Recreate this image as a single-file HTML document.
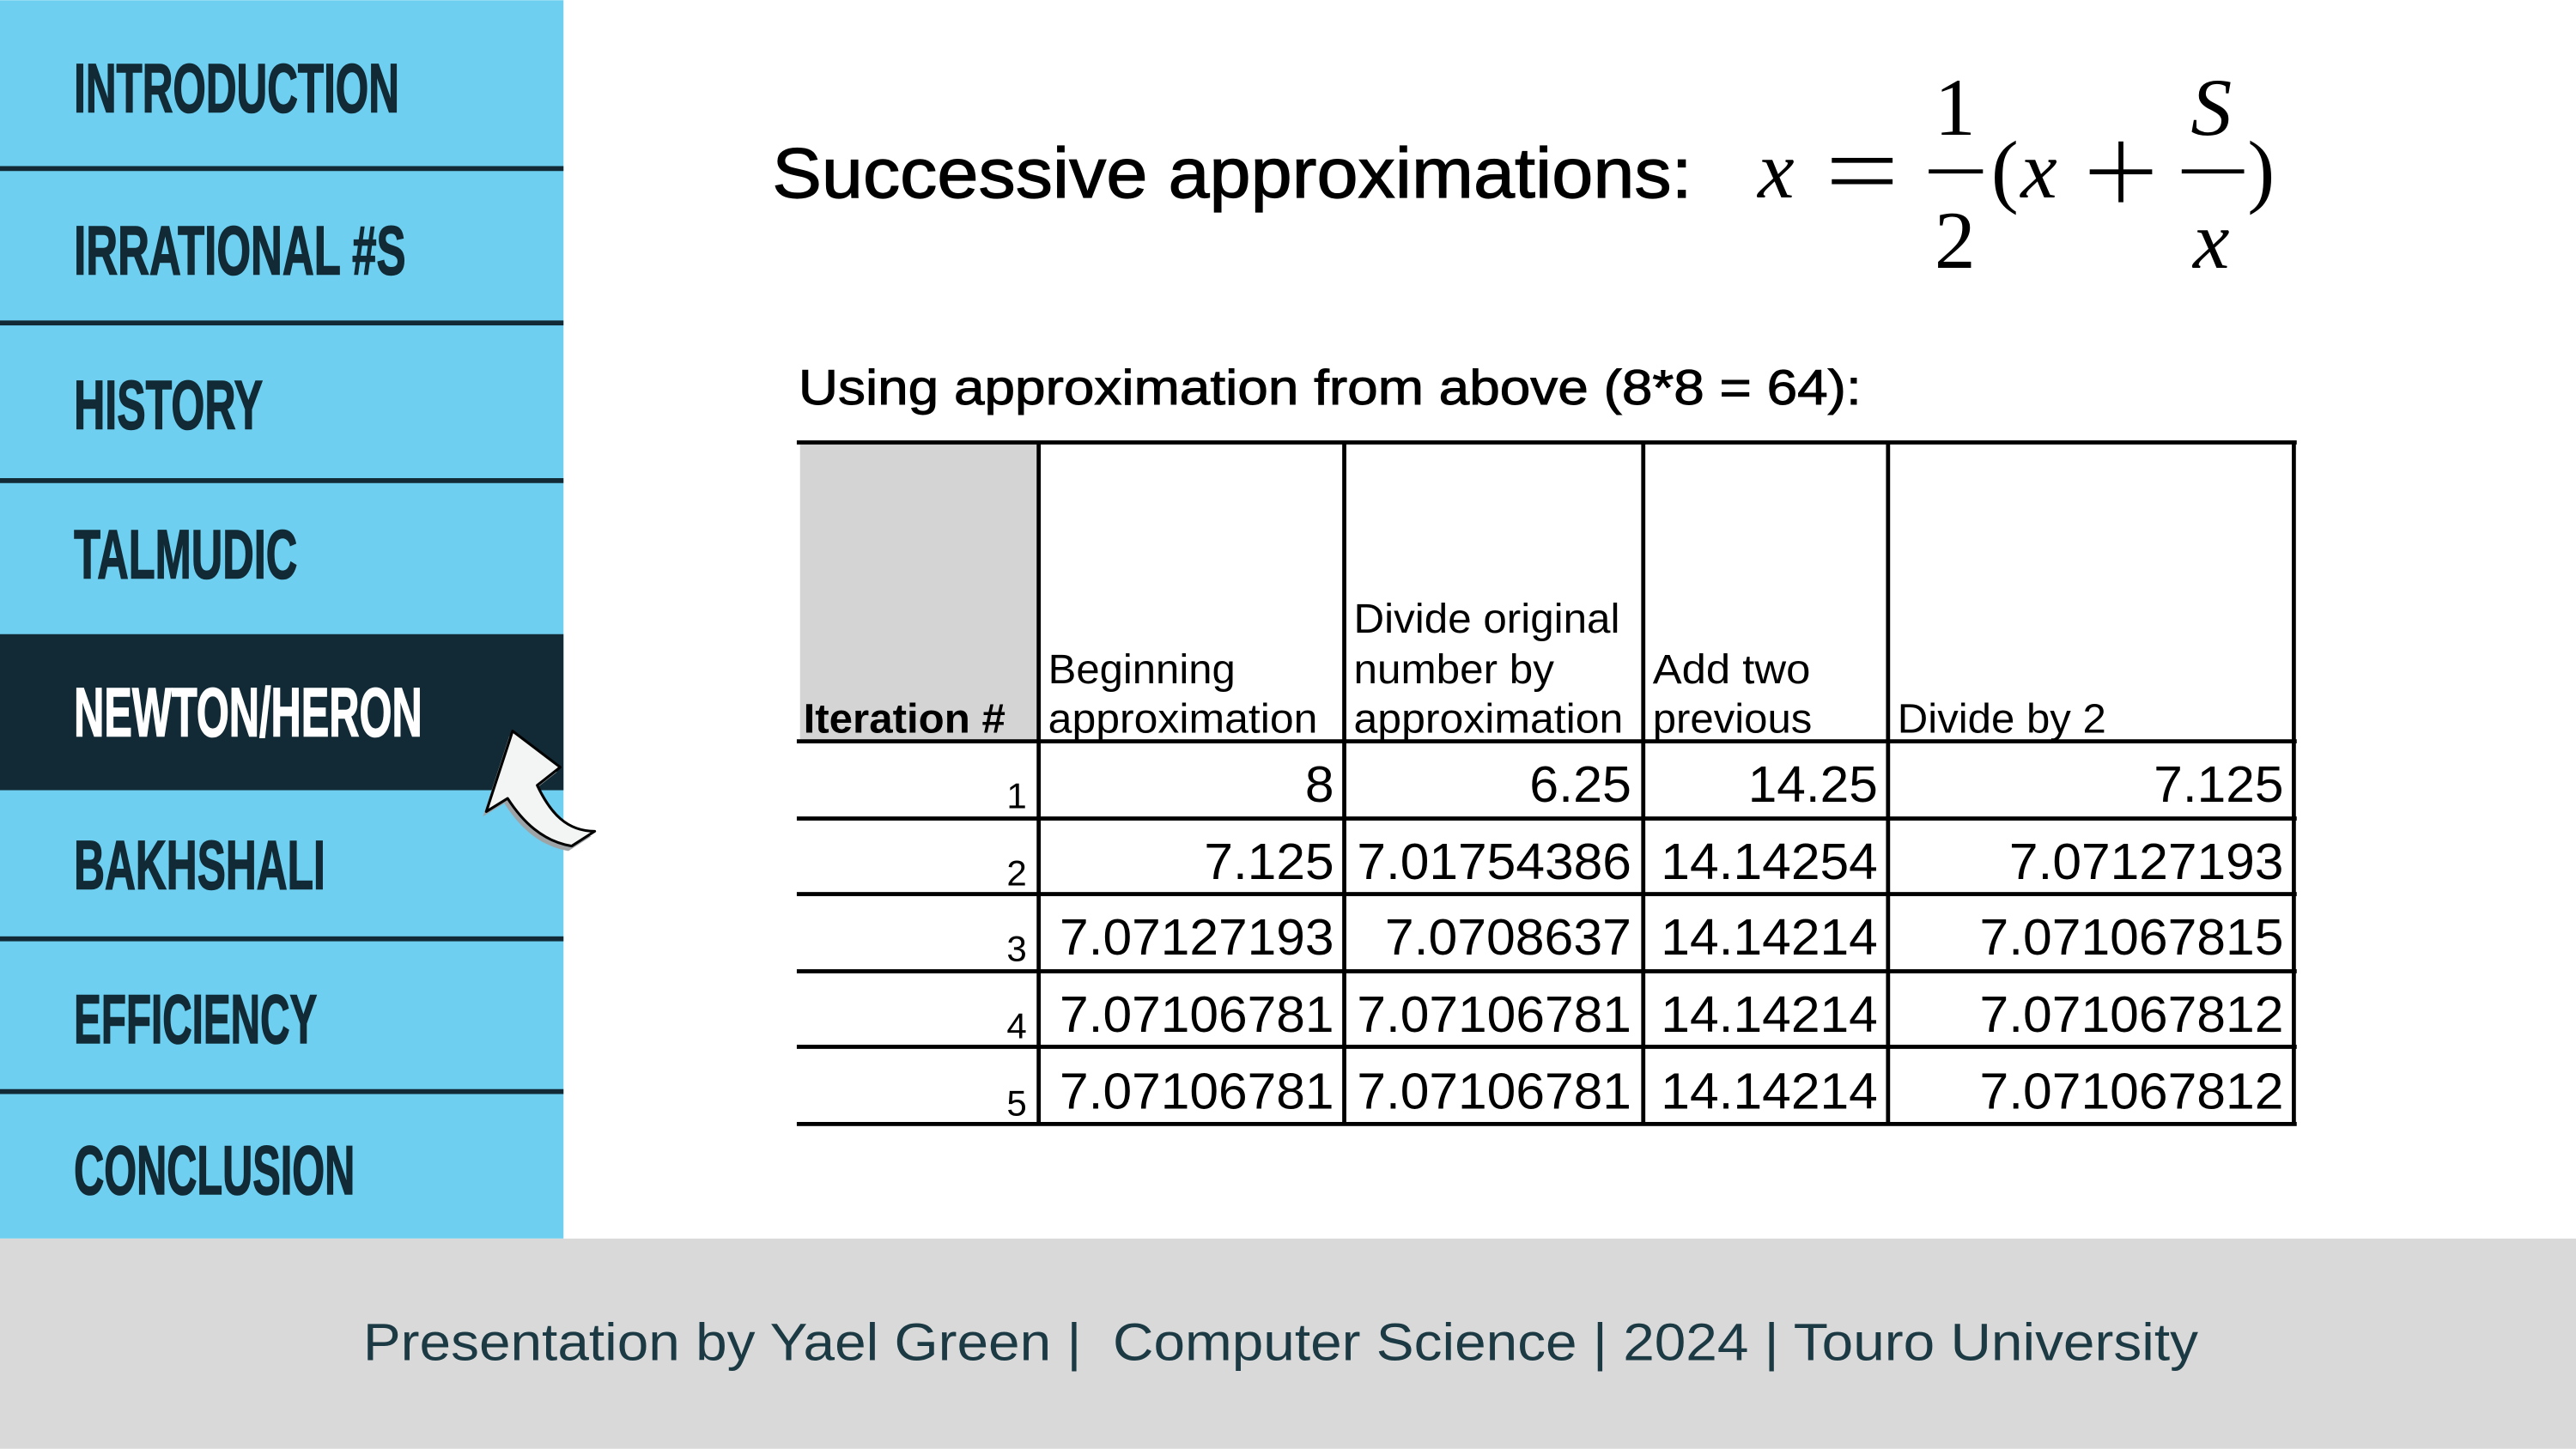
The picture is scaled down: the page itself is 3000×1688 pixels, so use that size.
<!DOCTYPE html>
<html><head><meta charset="utf-8"><style>html,body{margin:0;padding:0;background:#fff}svg{display:block}</style></head>
<body>
<svg width="3000" height="1688" viewBox="0 0 1568 882" xmlns="http://www.w3.org/2000/svg">
<rect width="1568" height="882" fill="#fff"/>
<rect x="0" y="0" width="343" height="754" fill="#6ecff0"/>
<rect x="0" y="386" width="343" height="95" fill="#112a35"/>
<g fill="#112a35">
<rect x="0" y="101" width="343" height="3"/>
<rect x="0" y="195" width="343" height="3"/>
<rect x="0" y="291" width="343" height="3"/>
<rect x="0" y="570" width="343" height="3"/>
<rect x="0" y="663" width="343" height="3"/>
</g>
<g font-family="Liberation Sans, sans-serif" font-weight="bold" font-size="42" fill="#112a35" stroke="#112a35" stroke-width="0.8">
<text x="45" y="68" textLength="198" lengthAdjust="spacingAndGlyphs">INTRODUCTION</text>
<text x="45" y="167" textLength="202" lengthAdjust="spacingAndGlyphs">IRRATIONAL #S</text>
<text x="45" y="261" textLength="115" lengthAdjust="spacingAndGlyphs">HISTORY</text>
<text x="45" y="352" textLength="136" lengthAdjust="spacingAndGlyphs">TALMUDIC</text>
<text x="45" y="448" textLength="212" lengthAdjust="spacingAndGlyphs" fill="#fff" stroke="#fff">NEWTON/HERON</text>
<text x="45" y="541" textLength="153" lengthAdjust="spacingAndGlyphs">BAKHSHALI</text>
<text x="45" y="635" textLength="148" lengthAdjust="spacingAndGlyphs">EFFICIENCY</text>
<text x="45" y="727" textLength="171" lengthAdjust="spacingAndGlyphs">CONCLUSION</text>
</g>
<path d="M312,445 L296,494 L309,486 C318,500 330,512 348,515 L362,506 C345,506 335,495 327,478 L341,467 Z" fill="#9ea3a6" transform="translate(-2,3)"/>
<path d="M312,445 L296,494 L309,486 C318,500 330,512 348,515 L362,506 C345,506 335,495 327,478 L341,467 Z" fill="#f3f4f4" stroke="#000" stroke-width="1.6" stroke-linejoin="round"/>
<text x="470" y="120" font-family="Liberation Sans, sans-serif" font-size="43" fill="#000" stroke="#000" stroke-width="0.6" textLength="560" lengthAdjust="spacingAndGlyphs">Successive approximations:</text>
<g font-family="Liberation Serif, serif" fill="#000">
<text x="1070" y="120" font-size="50" font-style="italic">x</text>
<rect x="1115" y="96" width="37" height="3"/>
<rect x="1115" y="109" width="37" height="3"/>
<text x="1190" y="82" font-size="50" text-anchor="middle">1</text>
<rect x="1174" y="103" width="33" height="2.5"/>
<text x="1190" y="163" font-size="50" text-anchor="middle">2</text>
<text x="1212" y="120" font-size="50">(</text>
<text x="1230" y="120" font-size="50" font-style="italic">x</text>
<rect x="1272" y="103" width="38" height="3"/>
<rect x="1289.5" y="86" width="3" height="37"/>
<text x="1346" y="82" font-size="50" font-style="italic" text-anchor="middle">S</text>
<rect x="1328" y="103" width="38" height="2.5"/>
<text x="1346" y="163" font-size="50" font-style="italic" text-anchor="middle">x</text>
<text x="1368" y="120" font-size="50">)</text>
</g>
<text x="486" y="246" font-family="Liberation Sans, sans-serif" font-size="30" fill="#000" stroke="#000" stroke-width="0.5" textLength="647" lengthAdjust="spacingAndGlyphs">Using approximation from above (8*8 = 64):</text>
<rect x="487" y="270" width="145" height="181" fill="#d4d4d4"/>
<g fill="#000">
<rect x="485" y="268" width="913" height="2.5"/>
<rect x="485" y="450" width="913" height="2.5"/>
<rect x="485" y="497" width="913" height="2.5"/>
<rect x="485" y="543" width="913" height="2.5"/>
<rect x="485" y="590" width="913" height="2.5"/>
<rect x="485" y="636" width="913" height="2.5"/>
<rect x="485" y="683" width="913" height="2.5"/>
<rect x="631" y="268" width="2.5" height="417"/>
<rect x="817" y="268" width="2.5" height="417"/>
<rect x="999" y="268" width="2.5" height="417"/>
<rect x="1148" y="268" width="2.5" height="417"/>
<rect x="1395" y="268" width="2.5" height="417"/>
</g>
<g font-family="Liberation Sans, sans-serif" font-size="25" fill="#000">
<text x="489" y="446" font-weight="bold" textLength="123" lengthAdjust="spacingAndGlyphs">Iteration #</text>
<text x="638" y="416" textLength="114" lengthAdjust="spacingAndGlyphs">Beginning</text>
<text x="638" y="446" textLength="164" lengthAdjust="spacingAndGlyphs">approximation</text>
<text x="824" y="385" textLength="162" lengthAdjust="spacingAndGlyphs">Divide original</text>
<text x="824" y="416" textLength="122" lengthAdjust="spacingAndGlyphs">number by</text>
<text x="824" y="446" textLength="164" lengthAdjust="spacingAndGlyphs">approximation</text>
<text x="1006" y="416" textLength="96" lengthAdjust="spacingAndGlyphs">Add two</text>
<text x="1006" y="446" textLength="97" lengthAdjust="spacingAndGlyphs">previous</text>
<text x="1155" y="446" textLength="127" lengthAdjust="spacingAndGlyphs">Divide by 2</text>
</g>
<g font-family="Liberation Sans, sans-serif" font-size="22" fill="#000" text-anchor="end">
<text x="625" y="492">1</text>
<text x="625" y="539">2</text>
<text x="625" y="585">3</text>
<text x="625" y="632">4</text>
<text x="625" y="679">5</text>
</g>
<g font-family="Liberation Sans, sans-serif" font-size="31" fill="#000" text-anchor="end">
<text x="812" y="488" textLength="17.6" lengthAdjust="spacingAndGlyphs">8</text>
<text x="993" y="488" textLength="62" lengthAdjust="spacingAndGlyphs">6.25</text>
<text x="1143" y="488" textLength="79" lengthAdjust="spacingAndGlyphs">14.25</text>
<text x="1390" y="488" textLength="79" lengthAdjust="spacingAndGlyphs">7.125</text>
<text x="812" y="535" textLength="79" lengthAdjust="spacingAndGlyphs">7.125</text>
<text x="993" y="535" textLength="167" lengthAdjust="spacingAndGlyphs">7.01754386</text>
<text x="1143" y="535" textLength="132" lengthAdjust="spacingAndGlyphs">14.14254</text>
<text x="1390" y="535" textLength="167" lengthAdjust="spacingAndGlyphs">7.07127193</text>
<text x="812" y="581" textLength="167" lengthAdjust="spacingAndGlyphs">7.07127193</text>
<text x="993" y="581" textLength="150" lengthAdjust="spacingAndGlyphs">7.0708637</text>
<text x="1143" y="581" textLength="132" lengthAdjust="spacingAndGlyphs">14.14214</text>
<text x="1390" y="581" textLength="185" lengthAdjust="spacingAndGlyphs">7.071067815</text>
<text x="812" y="628" textLength="167" lengthAdjust="spacingAndGlyphs">7.07106781</text>
<text x="993" y="628" textLength="167" lengthAdjust="spacingAndGlyphs">7.07106781</text>
<text x="1143" y="628" textLength="132" lengthAdjust="spacingAndGlyphs">14.14214</text>
<text x="1390" y="628" textLength="185" lengthAdjust="spacingAndGlyphs">7.071067812</text>
<text x="812" y="675" textLength="167" lengthAdjust="spacingAndGlyphs">7.07106781</text>
<text x="993" y="675" textLength="167" lengthAdjust="spacingAndGlyphs">7.07106781</text>
<text x="1143" y="675" textLength="132" lengthAdjust="spacingAndGlyphs">14.14214</text>
<text x="1390" y="675" textLength="185" lengthAdjust="spacingAndGlyphs">7.071067812</text>
</g>
<rect x="0" y="754" width="1568" height="128" fill="#d9d9d9"/>
<text x="221" y="828" font-family="Liberation Sans, sans-serif" font-size="32" fill="#1c3a44" textLength="1117" lengthAdjust="spacingAndGlyphs" xml:space="preserve">Presentation by Yael Green |  Computer Science | 2024 | Touro University</text>
</svg>
</body></html>
